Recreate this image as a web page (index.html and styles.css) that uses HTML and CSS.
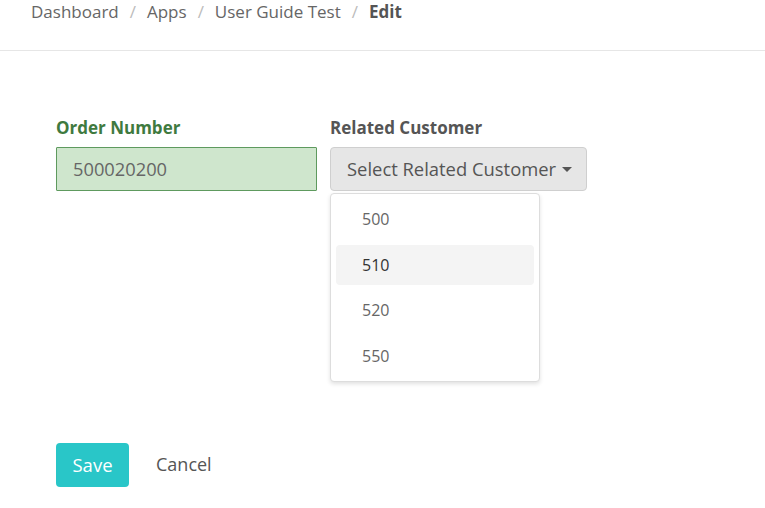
FILE: index.html
```html
<!DOCTYPE html>
<html>
<head>
<meta charset="utf-8">
<link rel="stylesheet" href="styles.css">
</head>
<body>
<header class="crumbs">
  <span class="crumb">Dashboard</span><span class="sep">/</span>
  <span class="crumb">Apps</span><span class="sep">/</span>
  <span class="crumb">User Guide Test</span><span class="sep">/</span>
  <span class="crumb current">Edit</span>
</header>
<main class="form">
  <div class="row">
    <div class="field success">
      <label class="label">Order Number</label>
      <div class="input">500020200</div>
    </div>
    <div class="field">
      <label class="label">Related Customer</label>
      <div class="dropdown">
        <button class="dd-btn">Select Related Customer <span class="caret"></span></button>
        <ul class="menu">
          <li class="item">500</li>
          <li class="item active">510</li>
          <li class="item">520</li>
          <li class="item">550</li>
        </ul>
      </div>
    </div>
  </div>
  <div class="actions">
    <button class="btn-save">Save</button>
    <button class="btn-cancel">Cancel</button>
  </div>
</main>
</body>
</html>
```
FILE: styles.css
```css
* { box-sizing: border-box; }
body {
  margin: 0;
  font-family: "Open Sans", "Noto Sans", sans-serif;
  color: #555;
  background: #fff;
}
.crumbs {
  height: 51px;
  border-bottom: 1px solid #e6e6e6;
  padding: 0 0 0 31px;
  font-size: 17px;
  line-height: 24px;
  color: #666;
  display: flex;
  align-items: flex-start;
}
.sep { color: #bbb; margin: 0 11px; }
.current { font-weight: 700; color: #555; }
.form { padding: 66px 0 0 56px; }
.row { display: flex; gap: 13px; }
.field { display: flex; flex-direction: column; }
.label {
  font-size: 17px;
  font-weight: 700;
  line-height: 22px;
  margin-bottom: 8px;
  color: #555;
}
.success .label { color: #3f7a3f; }
.input {
  width: 261px;
  height: 44px;
  border: 1px solid #5e9a5e;
  background: #cfe6cd;
  font-size: 18.3px;
  line-height: 42px;
  padding: 0 16px;
  color: #666;
  border-radius: 1px;
}
.dropdown { position: relative; }
.dd-btn {
  width: 257px;
  height: 44px;
  border: 1px solid #cfcfcf;
  background: #e6e6e6;
  border-radius: 4px;
  font-family: inherit;
  font-size: 18.4px;
  color: #555;
  padding: 0 0 2px 16px;
  text-align: left;
  display: flex;
  align-items: center;
}
.caret {
  display: inline-block;
  width: 0; height: 0;
  border-left: 5px solid transparent;
  border-right: 5px solid transparent;
  border-top: 5px solid #555;
  margin-left: 6px;
  margin-top: 2px;
}
.menu {
  position: absolute;
  top: 46px;
  left: 0;
  width: 210px;
  margin: 0;
  padding: 5px;
  list-style: none;
  background: #fff;
  border: 1px solid #ddd;
  border-radius: 4px;
  box-shadow: 0 2px 4px rgba(0,0,0,0.12);
}
.item {
  height: 40px;
  line-height: 40px;
  padding-left: 26px;
  font-size: 16px;
  color: #666;
  border-radius: 4px;
  margin: 0 0 5.5px;
}
.item:last-child { margin-bottom: 0; }
.item.active { background: #f4f4f4; color: #333; }
.actions {
  margin-top: 252px;
  display: flex;
  align-items: center;
}
.btn-save {
  width: 73px;
  height: 44px;
  border: 0;
  border-radius: 4px;
  background: #29c6c8;
  color: #fff;
  font-family: inherit;
  font-size: 18.5px;
  padding: 0 0 2px;
}
.btn-cancel {
  border: 0;
  background: none;
  font-family: inherit;
  font-size: 18px;
  color: #555;
  margin-left: 27px;
  padding: 0 0 2px;
}
```
